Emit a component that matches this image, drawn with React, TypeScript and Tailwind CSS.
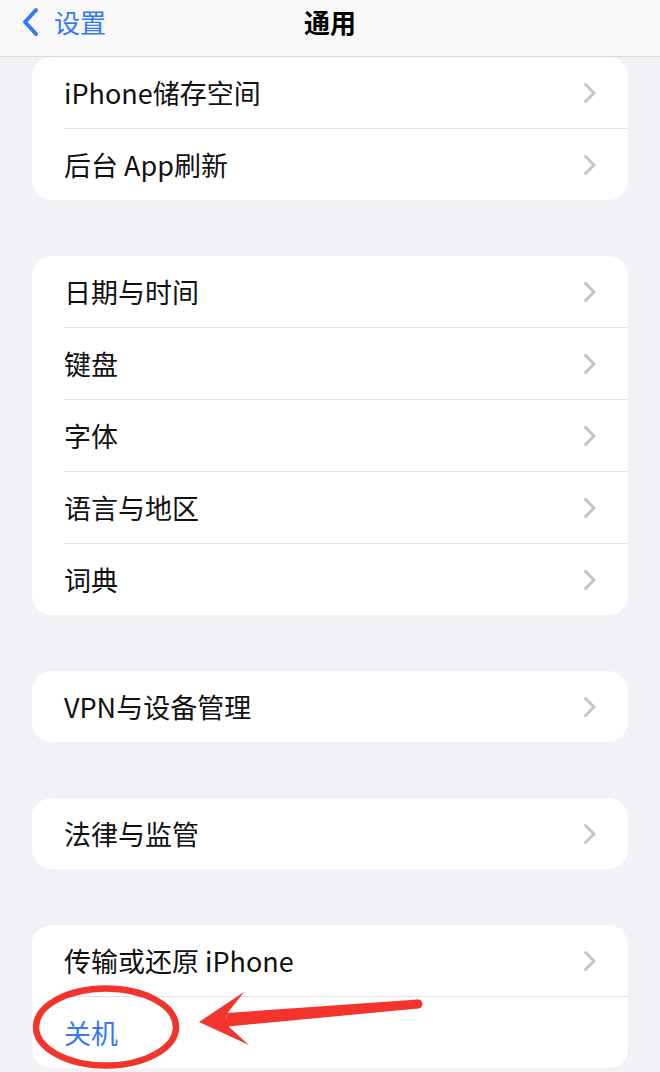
import React from 'react';

const groups: string[][] = [
  ['iPhone储存空间', '后台 App刷新'],
  ['日期与时间', '键盘', '字体', '语言与地区', '词典'],
  ['VPN与设备管理'],
  ['法律与监管'],
  ['传输或还原 iPhone', '关机'],
];

function Chevron() {
  return (
    <svg width="16" height="22" viewBox="0 0 16 22" fill="none" className="shrink-0">
      <path d="M3.5 2.5 L12 11 L3.5 19.5" stroke="#c4c4c7" strokeWidth="3" strokeLinecap="round" strokeLinejoin="round" />
    </svg>
  );
}

function Row({ label, last }: { label: string; last: boolean }) {
  const action = label === '关机';
  return (
    <div className="pl-8">
      <div className={`flex items-center justify-between pr-[30px] ${last ? 'h-[71px]' : 'h-[72px] border-b border-[#e2e2e5]'}`}>
        <span className={`text-[27px] leading-none ${action ? 'text-[#3478f6]' : 'text-[#111]'}`}>{label}</span>
        {!action && <Chevron />}
      </div>
    </div>
  );
}

export default function App() {
  return (
    <div
      className="relative w-[660px] h-[1072px] overflow-hidden bg-[#f2f2f6]"
      style={{ fontFamily: '"Noto Sans CJK SC", "Noto Sans", sans-serif' }}
    >
      {/* nav bar */}
      <div className="h-[57px] bg-[#f8f8f9] border-b border-[#d9d9dc] grid grid-cols-[1fr_auto_1fr] items-start pt-[7px]">
        <div className="flex items-center pl-5 gap-[14px] text-[#3478f6]">
          <svg width="20" height="30" viewBox="0 0 20 30" fill="none">
            <path d="M16 3 L5 15 L16 27" stroke="#3478f6" strokeWidth="4" strokeLinecap="round" strokeLinejoin="round" />
          </svg>
          <span className="text-[26px] leading-none">设置</span>
        </div>
        <div className="text-[26px] font-semibold leading-[30px] text-black">通用</div>
        <div />
      </div>

      <div className="px-8 flex flex-col gap-[56px]">
        {groups.map((g, gi) => (
          <div key={gi} className="bg-white rounded-[20px] overflow-hidden">
            {g.map((label, i) => (
              <Row key={label} label={label} last={i === g.length - 1} />
            ))}
          </div>
        ))}
      </div>

      {/* red annotation */}
      <svg className="absolute inset-0 pointer-events-none" width="660" height="1072" viewBox="0 0 660 1072">
        <ellipse cx="106" cy="1027" rx="70" ry="38.5" fill="none" stroke="#f2342c" strokeWidth="6.5" />
        <polygon points="226,1013 418,999.5 418,1008.5 228,1026.5" fill="#f2342c" />
        <circle cx="418" cy="1004" r="4.5" fill="#f2342c" />
        <polygon points="199,1022 244,992 226,1015 229,1027 249,1045" fill="#f2342c" />
      </svg>
    </div>
  );
}
